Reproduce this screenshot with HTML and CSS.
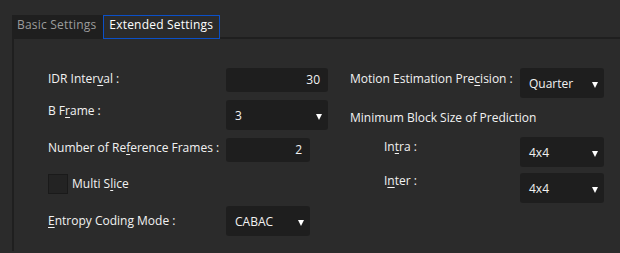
FILE: index.html
```html
<!DOCTYPE html>
<html lang="en">
<head>
  <meta charset="UTF-8">
  <title>Encoder Settings</title>
  <link rel="stylesheet" href="styles.css">
</head>
<body>
  <div class="tabs">
    <div class="tab">Basic Settings</div>
    <div class="tab active">Extended Settings</div>
  </div>

  <div class="panel">
    <!-- kolom kiri -->
    <div class="col left">
      <div class="row r1">
        <span class="label">IDR Inter<u>v</u>al :</span>
        <div class="field wide num">30</div>
      </div>
      <div class="row r2">
        <span class="label">B F<u>r</u>ame :</span>
        <div class="select wide"><span>3</span><i class="arrow"></i></div>
      </div>
      <div class="row r3">
        <span class="label">Number of Re<u>f</u>erence Frames :</span>
        <div class="field num">2</div>
      </div>
      <div class="row r4">
        <span class="check"></span>
        <span class="label">Multi S<u>l</u>ice</span>
      </div>
      <div class="row r5">
        <span class="label"><u>E</u>ntropy Coding Mode :</span>
        <div class="select"><span>CABAC</span><i class="arrow"></i></div>
      </div>
    </div>

    <!-- kolom kanan -->
    <div class="col right">
      <div class="row q1">
        <span class="label">Motion Estimation Pre<u>c</u>ision :</span>
        <div class="select"><span>Quarter</span><i class="arrow"></i></div>
      </div>
      <div class="row q2">
        <span class="label">Minimum Block Size of Prediction</span>
      </div>
      <div class="row q3 sub">
        <span class="label">In<u>t</u>ra :</span>
        <div class="select"><span>4x4</span><i class="arrow"></i></div>
      </div>
      <div class="row q4 sub">
        <span class="label">I<u>n</u>ter :</span>
        <div class="select"><span>4x4</span><i class="arrow"></i></div>
      </div>
    </div>
  </div>
</body>
</html>
```

FILE: styles.css
```css
body {
  margin: 0;
  background: #2b2b2b;
  color: #f2f2f2;
  font-family: 'Open Sans', 'Noto Sans', sans-serif;
  font-size: 12px;
  line-height: 16px;
  height: 253px;
  overflow: hidden;
}

.tabs {
  display: flex;
  padding: 15px 0 0 12px;
  height: 22px;
}

.tab {
  box-sizing: border-box;
  height: 22px;
  padding: 2px 7px 0 5px;
  background: #1f1f1f;
  color: #9c9c9c;
  letter-spacing: 0.2px;
}

.tab.active {
  background: #2b2b2b;
  color: #ffffff;
  border: 1px solid #0b50c8;
  padding: 1px 6px 0 5px;
  height: 24px;
}

.panel {
  margin-left: 12px;
  border-top: 2px solid #1f1f1f;
  border-left: 2px solid #1f1f1f;
  height: 214px;
  display: flex;
  padding: 29px 0 0 34px;
  box-sizing: border-box;
}

.col {
  display: flex;
  flex-direction: column;
}

.col.left {
  width: 302px;
}

.row {
  display: flex;
  align-items: flex-start;
}

.label {
  padding-top: 3px;
  white-space: nowrap;
}

.left .label {
  width: 178px;
}

.right .label {
  width: 170px;
}

.right .sub .label {
  width: 136px;
  padding-left: 34px;
}

u {
  text-decoration-thickness: 1px;
  text-underline-offset: 2px;
}

.field, .select {
  background: #1e1e1e;
  border-radius: 3px;
  box-sizing: border-box;
  width: 84px;
}

.field {
  height: 24px;
  padding: 4px 8px 0 8px;
  text-align: right;
}

.field.wide, .select.wide {
  width: 102px;
}

.select {
  height: 30px;
  display: flex;
  align-items: center;
  justify-content: space-between;
  padding: 2px 6px 0 9px;
}

.arrow {
  width: 0;
  height: 0;
  border-left: 3.5px solid transparent;
  border-right: 3.5px solid transparent;
  border-top: 6px solid #ffffff;
  margin-top: 1px;
}

.r1 { height: 24px; margin-bottom: 8px; }
.r2 { height: 30px; margin-bottom: 8px; }
.r3 { height: 24px; margin-bottom: 12px; }
.r3 .label { padding-top: 2px; }
.r4 { height: 20px; align-items: center; margin-bottom: 12px; }
.r4 .label { padding-top: 0; width: auto; }
.r5 { align-items: center; }
.r5 .label { padding-top: 0; }

.check {
  width: 20px;
  height: 20px;
  box-sizing: border-box;
  background: #232323;
  border: 1px solid #1a1a1a;
  margin-right: 4px;
}

.q1 { height: 30px; margin-bottom: 9px; }
.q2 { height: 30px; }
.q3 { height: 30px; margin-bottom: 6px; }
.q3 .label { padding-top: 2px; }
.q4 .label { padding-top: 0; }
```
